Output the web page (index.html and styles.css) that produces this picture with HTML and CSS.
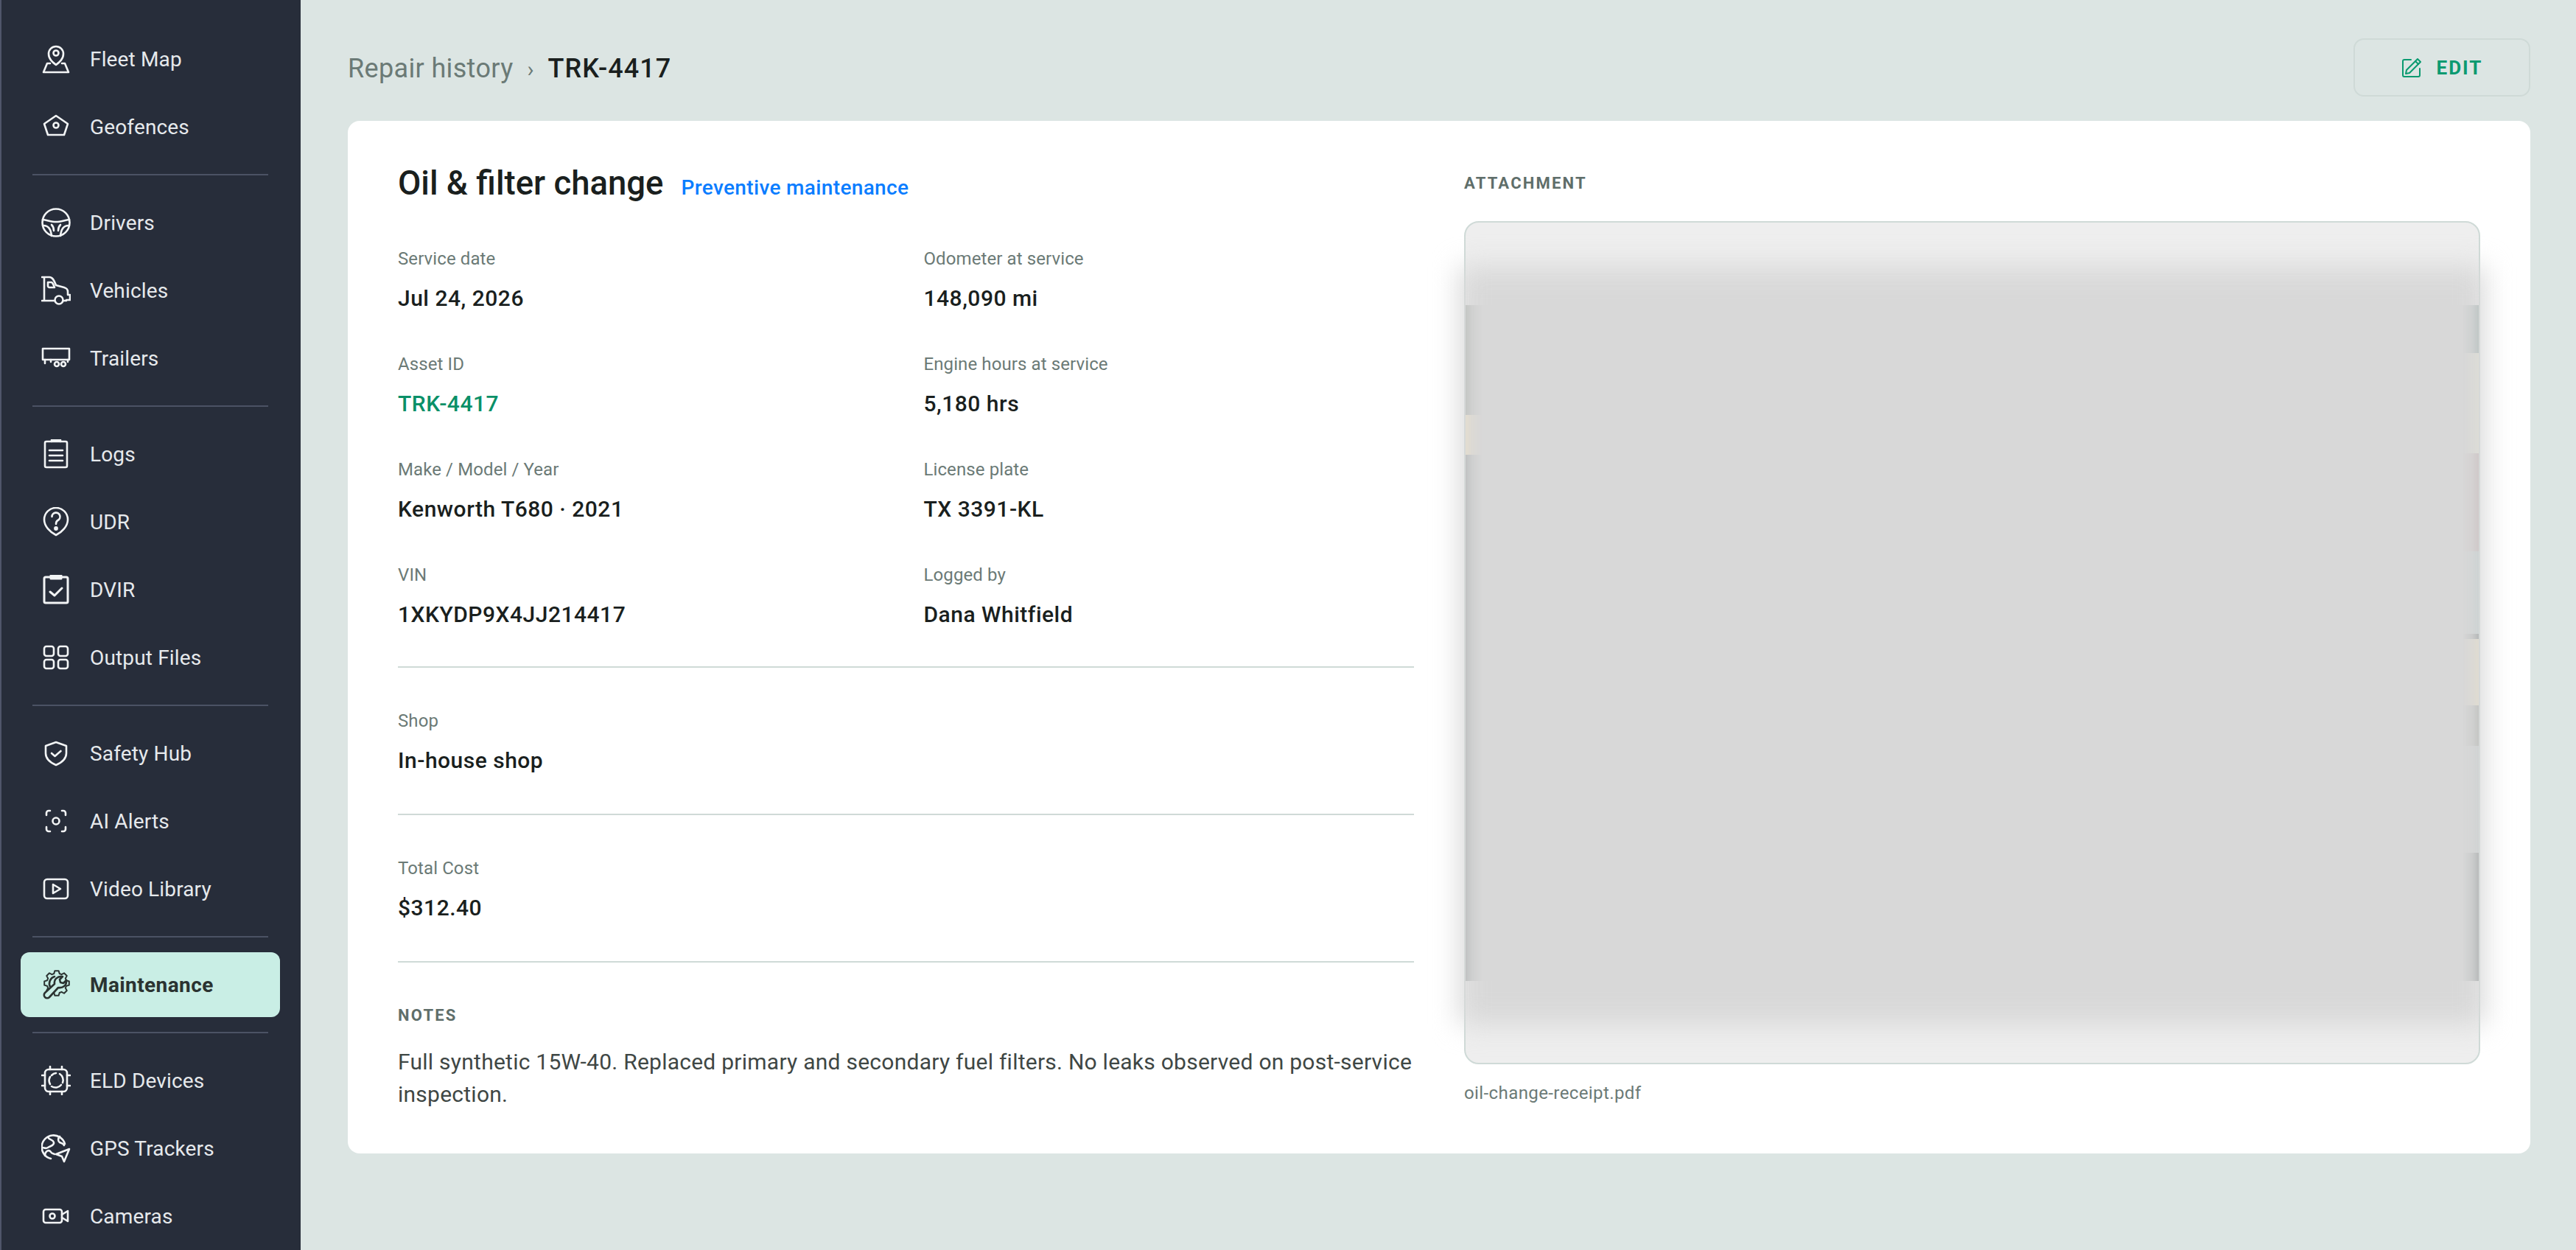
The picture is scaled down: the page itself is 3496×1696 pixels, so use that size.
FILE: index.html
```html
<!DOCTYPE html>
<html lang="en">
<head>
    <meta charset="UTF-8">
    <meta name="viewport" content="width=device-width, initial-scale=1.0">
    <title>Repair history - TRK-4417</title>
    <link rel="stylesheet" href="styles.css">
</head>
<body>

<div class="app">
    <nav class="sidebar">
        <a class="nav-item">
            <svg class="nav-icon" viewBox="0 0 40 40"><path d="M20 28c-5-4-10-8-10-15a10 10 0 0 1 20 0c0 7-5 11-10 15z"/><circle cx="20" cy="12" r="3.5"/><path d="M12 26H8L3 38h34l-5-12h-4"/></svg>
            Fleet Map
        </a>
        <a class="nav-item">
            <svg class="nav-icon" viewBox="0 0 40 40"><path d="M20 5l16 11-5 15H9L4 16z"/><circle cx="20" cy="18" r="3.5"/></svg>
            Geofences
        </a>
        <hr class="nav-divider">
        <a class="nav-item">
            <svg class="nav-icon" viewBox="0 0 40 40"><circle cx="20" cy="20" r="18.5"/><path d="M2 16c7 1 12 3 18 3s11-2 18-3"/><path d="M3 24c6 0 10 4 11 14M37 24c-6 0-10 4-11 14"/><path d="M14 23c2 2 3 4 3 8M26 23c-2 2-3 4-3 8"/></svg>
            Drivers
        </a>
        <a class="nav-item">
            <svg class="nav-icon" viewBox="0 0 40 40"><path d="M1 2h6M4 2v31M1 34h17M30 34h4M4 2h7c5 0 7 6 9 11l11 3c3 1 5 2 5 6v4h3v7h-5"/><path d="M9 9h5c1 0 3 4 4 7h-7c-1 0-2-1-2-2z"/><circle cx="24" cy="33" r="5.5"/></svg>
            Vehicles
        </a>
        <a class="nav-item">
            <svg class="nav-icon" viewBox="0 0 40 40"><path d="M2 7h36v15H2z"/><path d="M5 22v5M13 22v3M36 22v3"/><circle cx="21" cy="28" r="3"/><circle cx="30" cy="28" r="3"/></svg>
            Trailers
        </a>
        <hr class="nav-divider">
        <a class="nav-item">
            <svg class="nav-icon" viewBox="0 0 40 40"><rect x="5" y="3" width="30" height="35" rx="2"/><path d="M14 3V1h12v2M11 15h18M11 22h18M11 29h18"/></svg>
            Logs
        </a>
        <a class="nav-item">
            <svg class="nav-icon" viewBox="0 0 40 40"><path d="M20 38C12 34 4 26 4 17a16 16 0 0 1 32 0c0 9-8 17-16 21z"/><path d="M14.5 13a5.5 5.5 0 1 1 8 5c-2 1-2.5 2-2.5 5"/><circle class="dot" cx="20" cy="29" r="1.6"/></svg>
            UDR
        </a>
        <a class="nav-item">
            <svg class="nav-icon thick" viewBox="0 0 40 40"><rect x="4" y="3" width="32" height="35" rx="2"/><path d="M13 3V1h14v4H13zM12 23l6 5 10-10"/></svg>
            DVIR
        </a>
        <a class="nav-item">
            <svg class="nav-icon" viewBox="0 0 40 40"><rect x="4" y="5" width="13" height="13" rx="3"/><rect x="23" y="5" width="13" height="13" rx="3"/><rect x="4" y="23" width="13" height="12" rx="3"/><rect x="23" y="23" width="13" height="12" rx="3"/></svg>
            Output Files
        </a>
        <hr class="nav-divider">
        <a class="nav-item">
            <svg class="nav-icon" viewBox="0 0 40 40"><path d="M20 5l14 5v10c0 8-7 13-14 16C13 33 6 28 6 20V10z"/><path d="M14 20l4.5 4 8-7"/></svg>
            Safety Hub
        </a>
        <a class="nav-item">
            <svg class="nav-icon" viewBox="0 0 40 40"><path d="M7 12V9a3 3 0 0 1 3-3h2M28 6h2a3 3 0 0 1 3 3v3M33 28v3a3 3 0 0 1-3 3h-2M12 34h-2a3 3 0 0 1-3-3v-3"/><circle cx="20" cy="20" r="4.5"/></svg>
            AI Alerts
        </a>
        <a class="nav-item">
            <svg class="nav-icon" viewBox="0 0 40 40"><rect x="4" y="7" width="32" height="26" rx="4"/><path d="M16 14l10 6-10 6z"/></svg>
            Video Library
        </a>
        <hr class="nav-divider">
        <a class="nav-item active">
            <svg class="nav-icon" viewBox="0 0 40 40">
                <polygon class="gear" transform="translate(21 18)" points="12.98,-3.72 16.79,-2.66 16.79,2.66 12.98,3.72 11.81,6.54 13.75,9.99 9.99,13.75 6.54,11.81 3.72,12.98 2.66,16.79 -2.66,16.79 -3.72,12.98 -6.54,11.81 -9.99,13.75 -13.75,9.99 -11.81,6.54 -12.98,3.72 -16.79,2.66 -16.79,-2.66 -12.98,-3.72 -11.81,-6.54 -13.75,-9.99 -9.99,-13.75 -6.54,-11.81 -3.72,-12.98 -2.66,-16.79 2.66,-16.79 3.72,-12.98 6.54,-11.81 9.99,-13.75 13.75,-9.99 11.81,-6.54"/>
                <path d="M12 23a10 10 0 0 1 6-14"/>
                <path class="wrench" d="M5 31L18 19c-1-6 4-11 11-10l-4 4 1 4 4 1 4-4c1 7-5 11-11 10L11 37a4 4 0 0 1-6-6z"/>
            </svg>
            Maintenance
        </a>
        <hr class="nav-divider">
        <a class="nav-item">
            <svg class="nav-icon" viewBox="0 0 40 40"><rect x="5" y="5" width="30" height="30" rx="5"/><path d="M12 1v4M28 1v4M12 35v4M28 35v4M1 13h4M1 27h4M35 13h4M35 27h4"/><path d="M14 13a10 10 0 0 1 6-3M25 11a10 10 0 0 1 4 12M27 26a10 10 0 0 1-13 2M12 25a10 10 0 0 1 0-10"/></svg>
            ELD Devices
        </a>
        <a class="nav-item">
            <svg class="nav-icon" viewBox="0 0 40 40"><path d="M32 14A16 16 0 1 0 13 34"/><path d="M9 5c2 4 7 3 8 7s-5 5-8 7-6 0-7 0M5 30c0-6 5-9 8-5 1 2 3 2 5 3M25 4c-3 3-2 7 0 8s5 1 6 4"/><path d="M38 21l-18 7 8 3 3 7z"/></svg>
            GPS Trackers
        </a>
        <a class="nav-item">
            <svg class="nav-icon" viewBox="0 0 40 40"><rect x="3" y="11" width="25" height="18" rx="3"/><circle cx="15" cy="20" r="3.5"/><path d="M28 18l8-5v14l-8-5"/></svg>
            Cameras
        </a>
    </nav>

    <main class="main">
        <div class="topbar">
            <div class="breadcrumb">
                <span class="crumb-link">Repair history</span>
                <span class="crumb-sep">›</span>
                <span class="crumb-current">TRK-4417</span>
            </div>
            <button class="edit-btn" type="button">
                <svg class="edit-icon" viewBox="0 0 28 28"><path d="M13 3H4a2 2 0 0 0-2 2v19a2 2 0 0 0 2 2h19a2 2 0 0 0 2-2v-9"/><path d="M22 2l4 4L11 21l-5 1 1-5z"/><path d="M19 5l4 4"/></svg>
                EDIT
            </button>
        </div>

        <section class="card">
            <div class="details">
                <div class="title-row">
                    <h1 class="title">Oil &amp; filter change</h1>
                    <span class="tag">Preventive maintenance</span>
                </div>
                <div class="field-grid">
                    <div class="field"><div class="field-label">Service date</div><div class="field-value">Jul 24, 2026</div></div>
                    <div class="field"><div class="field-label">Odometer at service</div><div class="field-value">148,090 mi</div></div>
                    <div class="field"><div class="field-label">Asset ID</div><div class="field-value link">TRK-4417</div></div>
                    <div class="field"><div class="field-label">Engine hours at service</div><div class="field-value">5,180 hrs</div></div>
                    <div class="field"><div class="field-label">Make / Model / Year</div><div class="field-value">Kenworth T680 · 2021</div></div>
                    <div class="field"><div class="field-label">License plate</div><div class="field-value">TX 3391-KL</div></div>
                    <div class="field"><div class="field-label">VIN</div><div class="field-value">1XKYDP9X4JJ214417</div></div>
                    <div class="field"><div class="field-label">Logged by</div><div class="field-value">Dana Whitfield</div></div>
                </div>
                <div class="section">
                    <div class="field-label">Shop</div>
                    <div class="field-value">In-house shop</div>
                </div>
                <div class="section">
                    <div class="field-label">Total Cost</div>
                    <div class="field-value">$312.40</div>
                </div>
                <div class="notes">
                    <div class="caps-label">NOTES</div>
                    <p class="notes-text">Full synthetic 15W-40. Replaced primary and secondary fuel filters. No leaks observed on post-service inspection.</p>
                </div>
            </div>

            <div class="attachment">
                <div class="caps-label">ATTACHMENT</div>
                <div class="preview">
                    <div class="redact">
                        <span class="edge edge-left"></span>
                        <span class="edge edge-right"></span>
                    </div>
                </div>
                <div class="file-name">oil-change-receipt.pdf</div>
            </div>
        </section>
    </main>
</div>

</body>
</html>
```
FILE: styles.css
```css
* {
    box-sizing: border-box;
}
html, body {
    margin: 0;
    height: 100%;
}
body {
    font-family: Roboto, "Noto Sans", sans-serif;
    background: #dce5e3;
    color: #1a1f1e;
    overflow: hidden;
}
.app {
    display: flex;
    height: 100vh;
}

/* sidebar */
.sidebar {
    width: 408px;
    flex-shrink: 0;
    padding: 36px 28px 0;
    background: #272d3a;
    border-left: 2px solid #50566a;
    display: flex;
    flex-direction: column;
    gap: 4px;
    overflow: hidden;
}
.nav-item {
    height: 88px;
    flex-shrink: 0;
    display: flex;
    align-items: center;
    gap: 26px;
    margin-left: -2px;
    padding-left: 28px;
    border-radius: 12px;
    font-size: 28px;
    letter-spacing: 0.15px;
    color: #e6e9ec;
}
.nav-item.active {
    background: #c9eee5;
    color: #2b3331;
    font-weight: 700;
    letter-spacing: 0.4px;
}
.nav-icon {
    width: 40px;
    height: 40px;
    flex-shrink: 0;
    fill: none;
    stroke: #f2f4f5;
    stroke-width: 2.6;
    stroke-linecap: round;
    stroke-linejoin: round;
}
.nav-icon.thick {
    stroke-width: 3;
}
.nav-icon .dot {
    fill: #f2f4f5;
}
.active .nav-icon {
    stroke: #2b3331;
}
.active .gear {
    stroke-width: 2;
}
.active .wrench {
    fill: #c9eee5;
}
.nav-divider {
    width: 320px;
    height: 2px;
    flex-shrink: 0;
    margin: 16px 0 16px 14px;
    border: 0;
    background: #4b5264;
}

/* main area */
.main {
    flex: 1;
    min-width: 0;
    padding: 52px 62px 0 64px;
}
.topbar {
    height: 79px;
    margin-bottom: 33px;
    display: flex;
    align-items: center;
    justify-content: space-between;
}
.breadcrumb {
    display: flex;
    align-items: center;
    padding-top: 3px;
    font-size: 36px;
}
.crumb-link {
    letter-spacing: 0.35px;
    color: #6b7a76;
}
.crumb-sep {
    margin: 0 19px;
    font-size: 30px;
    color: #6b7a76;
}
.crumb-current {
    font-weight: 500;
    letter-spacing: 1px;
}
.edit-btn {
    width: 240px;
    height: 79px;
    display: flex;
    align-items: center;
    justify-content: center;
    gap: 20px;
    background: transparent;
    border: 2px solid #cfdad7;
    border-radius: 14px;
    font-family: inherit;
    font-size: 26px;
    font-weight: 700;
    letter-spacing: 2px;
    color: #0a9a70;
}
.edit-icon {
    width: 28px;
    height: 28px;
    fill: none;
    stroke: #0a9a70;
    stroke-width: 2;
    stroke-linejoin: round;
    stroke-linecap: round;
}

/* card */
.card {
    display: grid;
    grid-template-columns: 1fr 1fr;
    gap: 68px;
    padding: 60px 68px 58px;
    background: #fff;
    border-radius: 16px;
}
.title-row {
    display: flex;
    align-items: baseline;
    gap: 24px;
    height: 56px;
    margin-top: -3px;
    margin-bottom: 58px;
}
.title {
    margin: 0;
    font-size: 45.5px;
    line-height: 56px;
    font-weight: 500;
}
.tag {
    font-size: 28px;
    font-weight: 500;
    letter-spacing: 0.35px;
    color: #0b7dff;
}
.field-grid {
    display: grid;
    grid-template-columns: 1fr 1fr;
    column-gap: 48px;
    row-gap: 55px;
    padding-bottom: 52px;
    border-bottom: 2px solid #cfdad7;
}
.field-label {
    height: 32px;
    line-height: 32px;
    font-size: 24px;
    letter-spacing: 0.1px;
    color: #6b7a76;
}
.field-value {
    height: 36px;
    line-height: 36px;
    margin-top: 20px;
    font-size: 30px;
    font-weight: 500;
    letter-spacing: 0.5px;
}
.field-value.link {
    color: #0a9068;
}
.section {
    padding: 56px 0 54px;
    border-bottom: 2px solid #cfdad7;
}
.notes {
    padding-top: 57px;
}
.caps-label {
    height: 30px;
    line-height: 30px;
    font-size: 22px;
    font-weight: 700;
    letter-spacing: 2.2px;
    color: #5f6e6a;
}
.notes-text {
    margin: 26px 0 0;
    font-size: 30px;
    line-height: 44px;
    letter-spacing: 0.25px;
    color: #3f4745;
}

/* attachment */
.attachment {
    padding-top: 10px;
}
.preview {
    position: relative;
    height: 1144px;
    margin-top: 36px;
    background: #eeeeee;
    border: 2px solid #cfdad7;
    border-radius: 20px;
}
.preview::before {
    content: "";
    position: absolute;
    top: 60px;
    bottom: 52px;
    left: -8px;
    right: -8px;
    background: #d8d8d8;
    filter: blur(18px);
}
.redact {
    position: absolute;
    top: 112px;
    left: 0;
    right: 0;
    height: 917px;
    background: #d8d8d8;
}
.edge {
    position: absolute;
    top: 0;
    bottom: 0;
    width: 22px;
}
.edge-left {
    left: 0;
    background: linear-gradient(to bottom,
        #c4c6c4 0 149px, #e2dccf 149px 203px, #c0c2c2 203px);
    -webkit-mask-image: linear-gradient(to right, #000, rgba(0, 0, 0, 0.4) 40%, transparent);
    mask-image: linear-gradient(to right, #000, rgba(0, 0, 0, 0.4) 40%, transparent);
}
.edge-right {
    right: 0;
    background: linear-gradient(to bottom,
        #bfc6c5 0 65px, #dcdcd6 65px 201px, #cfc8c8 201px 334px,
        #cdd3d3 334px 446px, #b5b8b8 446px 453px, #dfdbd0 453px 543px,
        #c4c5c3 543px 598px, #d0d3d3 598px 743px, #b8bbbb 743px);
    -webkit-mask-image: linear-gradient(to left, #000, rgba(0, 0, 0, 0.4) 40%, transparent);
    mask-image: linear-gradient(to left, #000, rgba(0, 0, 0, 0.4) 40%, transparent);
}
.file-name {
    height: 32px;
    line-height: 32px;
    margin-top: 23px;
    font-size: 24px;
    letter-spacing: 0.4px;
    color: #6b7a76;
}
```
